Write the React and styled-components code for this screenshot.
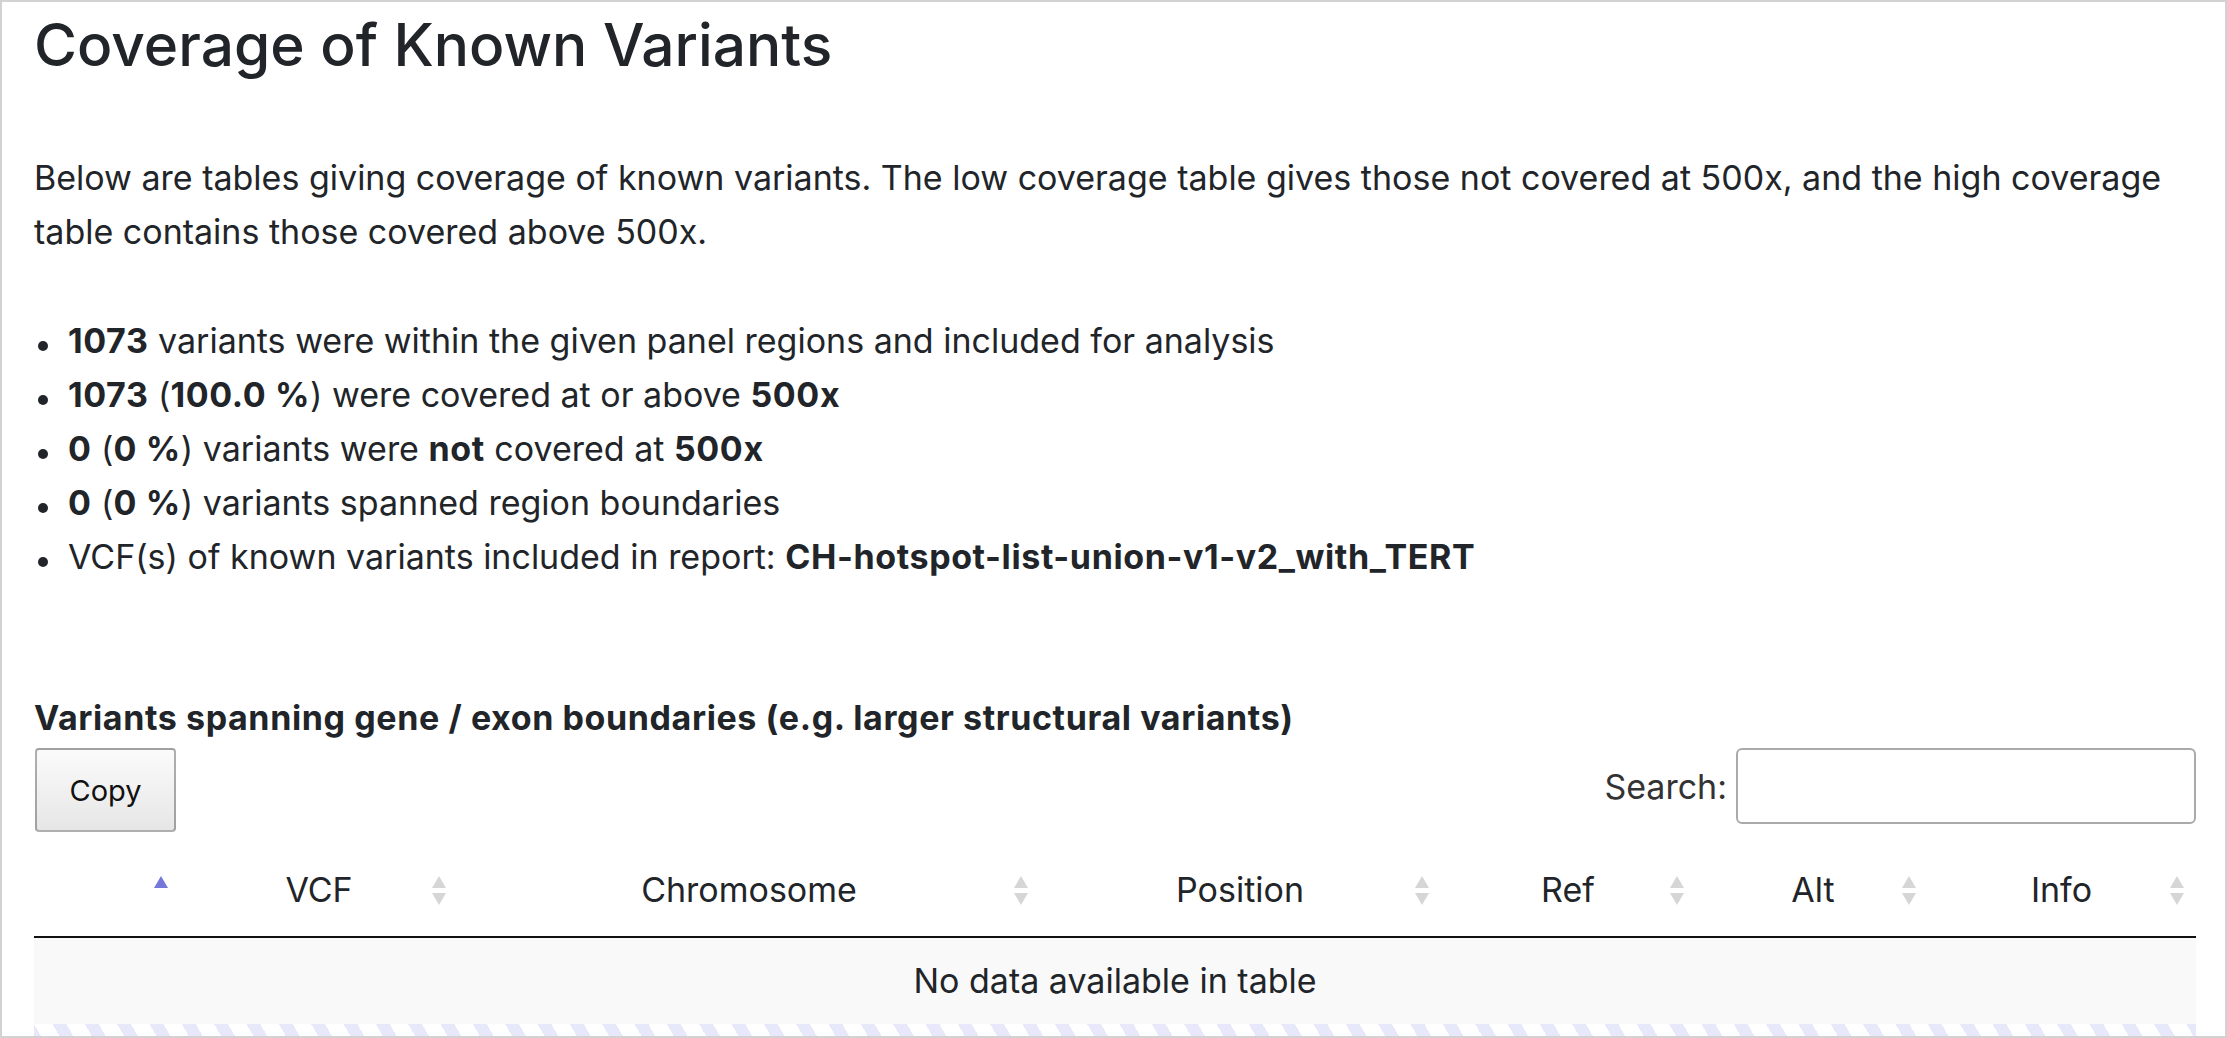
import React from 'react';
import styled, { createGlobalStyle } from 'styled-components';

const GlobalStyle = createGlobalStyle`
  * { box-sizing: border-box; }
  html, body {
    margin: 0;
    padding: 0;
    height: 100%;
    overflow: hidden;
    background: #fff;
  }
  body {
    font-family: Inter, "Liberation Sans", sans-serif;
    color: #212529;
  }
`;

const Frame = styled.div`
  height: 100vh;
  border: 2px solid #d2d2d2;
  padding: 8px 29px 0 32px;
  overflow: hidden;
`;

const Title = styled.h3`
  margin: 0;
  font-size: 58.6px;
  font-weight: 500;
  line-height: 70px;
`;

const Intro = styled.p`
  margin: 71px 0 0;
  font-size: 34px;
  line-height: 54px;
`;

const Facts = styled.ul`
  margin: 55px 0 0;
  padding: 0;
  list-style: none;
  font-size: 34px;
  line-height: 54px;
`;

const Fact = styled.li`
  &::before {
    content: "";
    display: inline-block;
    width: 10px;
    height: 10px;
    border-radius: 50%;
    background: #212529;
    margin: 0 20px 0 4px;
    vertical-align: 2px;
  }
`;

const Strong = styled.b`
  font-weight: 700;
  letter-spacing: 0.6px;
`;

const SectionTitle = styled.div`
  margin-top: 107px;
  font-size: 34px;
  line-height: 54px;
  font-weight: 700;
  letter-spacing: 0.6px;
`;

const Toolbar = styled.div`
  margin-top: 3px;
  display: flex;
  justify-content: space-between;
  align-items: flex-start;
`;

const Button = styled.button`
  width: 141px;
  height: 84px;
  margin-left: 1px;
  padding: 0;
  font-family: inherit;
  font-size: 29px;
  color: #111;
  border: 2px solid rgba(0, 0, 0, 0.3);
  border-radius: 4px;
  background: linear-gradient(to bottom, #fbfbfb 0%, #e6e6e6 100%);
`;

const SearchBox = styled.label`
  display: flex;
  align-items: center;
  font-size: 34px;
  color: #333;
`;

const SearchInput = styled.input`
  margin-left: 9px;
  width: 460px;
  height: 76px;
  border: 2px solid #aaa;
  border-radius: 6px;
  background: #fff;
`;

const Table = styled.table`
  margin-top: 6px;
  width: 100%;
  table-layout: fixed;
  border-collapse: separate;
  border-spacing: 0;
  font-size: 34px;
  line-height: 54px;
`;

const Col = styled.col`
  width: ${p => p.$w}px;
`;

const Th = styled.th`
  position: relative;
  padding: 25px 40px 19px;
  font-weight: 400;
  text-align: center;
  white-space: nowrap;
  border-bottom: 2px solid #111;
`;

const Td = styled.td`
  padding: 16px;
  text-align: center;
  background: #f9f9f9;
`;

const SortIcon = styled.svg`
  position: absolute;
  right: ${p => p.$right}px;
  top: calc(50% + 4px);
  transform: translateY(-50%);
`;

const Stripes = styled.div`
  height: 24px;
  background: repeating-linear-gradient(
    60deg,
    #e7e8fa 0 12px,
    #fff 12px 28px
  );
`;

function Sort({ active, right }) {
  return (
    <SortIcon $right={right} width="14" height="30" viewBox="0 0 14 30">
      <polygon points="0,12 7,0 14,12" fill={active ? '#7479d9' : '#d6d6d6'} />
      {!active && <polygon points="0,17 14,17 7,29" fill="#d6d6d6" />}
    </SortIcon>
  );
}

const columns = [
  { label: '', w: 149, right: 15, active: true },
  { label: 'VCF', w: 272, right: 9 },
  { label: 'Chromosome', w: 588, right: 15 },
  { label: 'Position', w: 394, right: 8 },
  { label: 'Ref', w: 262, right: 15 },
  { label: 'Alt', w: 228, right: 11 },
  { label: 'Info', w: 269, right: 12 },
];

export default function App() {
  return (
    <>
      <GlobalStyle />
      <Frame>
        <Title>Coverage of Known Variants</Title>
        <Intro>
          Below are tables giving coverage of known variants. The low coverage table gives those
          not covered at 500x, and the high coverage table contains those covered above 500x.
        </Intro>
        <Facts>
          <Fact><Strong>1073</Strong> variants were within the given panel regions and included for analysis</Fact>
          <Fact><Strong>1073</Strong> (<Strong>100.0 %</Strong>) were covered at or above <Strong>500x</Strong></Fact>
          <Fact><Strong>0</Strong> (<Strong>0 %</Strong>) variants were <Strong>not</Strong> covered at <Strong>500x</Strong></Fact>
          <Fact><Strong>0</Strong> (<Strong>0 %</Strong>) variants spanned region boundaries</Fact>
          <Fact>VCF(s) of known variants included in report: <Strong>CH-hotspot-list-union-v1-v2_with_TERT</Strong></Fact>
        </Facts>
        <SectionTitle>Variants spanning gene / exon boundaries (e.g. larger structural variants)</SectionTitle>
        <Toolbar>
          <Button type="button">Copy</Button>
          <SearchBox>
            Search:<SearchInput type="search" />
          </SearchBox>
        </Toolbar>
        <Table>
          <colgroup>
            {columns.map((c, i) => <Col key={i} $w={c.w} />)}
          </colgroup>
          <thead>
            <tr>
              {columns.map((c, i) => (
                <Th key={i}>
                  {c.label}
                  <Sort active={c.active} right={c.right} />
                </Th>
              ))}
            </tr>
          </thead>
          <tbody>
            <tr>
              <Td colSpan={7}>No data available in table</Td>
            </tr>
          </tbody>
        </Table>
        <Stripes />
      </Frame>
    </>
  );
}
